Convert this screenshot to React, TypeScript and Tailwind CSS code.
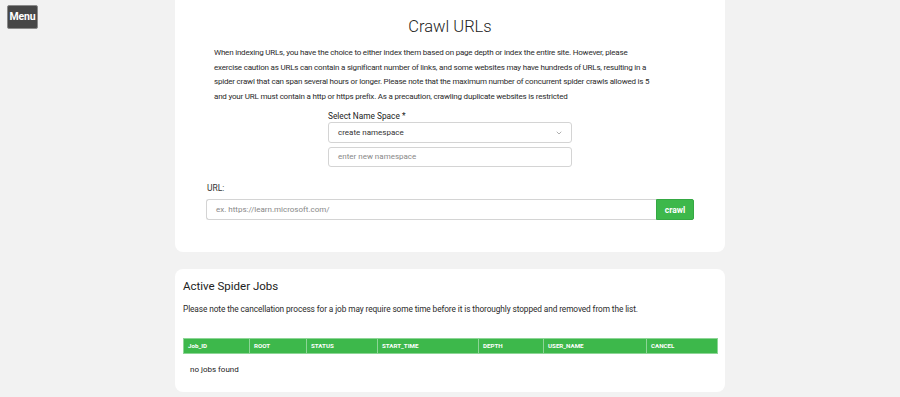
import { ChevronDown } from "lucide-react";

const COLUMNS = [
  { label: "Job_ID", width: "w-[65px]" },
  { label: "ROOT", width: "w-[57px]" },
  { label: "STATUS", width: "w-[71px]" },
  { label: "START_TIME", width: "w-[101px]" },
  { label: "DEPTH", width: "w-[65px]" },
  { label: "USER_NAME", width: "w-[103px]" },
  { label: "CANCEL", width: "flex-1" },
];

export default function App() {
  return (
    <div
      className="relative min-h-[397px] bg-[#f2f2f2] text-[#222]"
      style={{ fontFamily: "Roboto, 'Noto Sans', sans-serif" }}
    >
      <button className="absolute left-[7px] top-[5px] h-[24px] w-[31px] rounded-[2px] border border-[#8a8a8a] bg-[#474747] text-[10.5px] font-bold leading-none tracking-[-0.2px] text-white">
        Menu
      </button>

      <div className="mx-auto flex w-[550px] flex-col gap-[17px]">
        {/* crawl card */}
        <div className="rounded-b-[8px] bg-white px-[31px] pb-[32px] pt-[16px]">
          <h1 className="text-center text-[16.5px] font-light leading-[22px] text-[#222]">
            Crawl URLs
          </h1>
          <p className="ml-[8px] mt-[8px] max-w-[440px] text-[8px] leading-[14.6px] tracking-[-0.2px] text-[#2a2a2a]">
            When indexing URLs, you have the choice to either index them based on page depth or
            index the entire site. However, please exercise caution as URLs can contain a
            significant number of links, and some websites may have hundreds of URLs, resulting in
            a spider crawl that can span several hours or longer. Please note that the maximum
            number of concurrent spider crawls allowed is 5 and your URL must contain a http or
            https prefix. As a precaution, crawling duplicate websites is restricted
          </p>

          <div className="mx-auto mt-[6px] flex w-[244px] flex-col">
            <label className="text-[8.3px] leading-[12px] text-[#222]">Select Name Space *</label>
            <div className="flex h-[21px] items-center justify-between rounded-[3px] border border-[#d4d4d4] pl-[9px] pr-[8px]">
              <span className="text-[8px] text-[#333]">create namespace</span>
              <ChevronDown className="h-[8px] w-[8px] text-[#888]" strokeWidth={2} />
            </div>
            <div className="mt-[4px] flex h-[20px] items-center rounded-[3px] border border-[#d4d4d4] pl-[9px]">
              <span className="text-[8px] text-[#888]">enter new namespace</span>
            </div>
          </div>

          <div className="mt-[15px]">
            <label className="block pl-[1px] text-[8.5px] leading-[12px] text-[#333]">URL:</label>
            <div className="mt-[5px] flex h-[21px]">
              <div className="flex flex-1 items-center rounded-l-[3px] border border-r-0 border-[#d4d4d4] pl-[9px]">
                <span className="text-[8px] text-[#888]">ex. https://learn.microsoft.com/</span>
              </div>
              <button className="w-[38px] rounded-r-[2px] border border-[#35a843] bg-[#3db84b] text-[8.5px] font-bold text-white">
                crawl
              </button>
            </div>
          </div>
        </div>

        {/* jobs card */}
        <div className="rounded-[8px] bg-white pb-[17px] pl-[8px] pr-[7px] pt-[10px]">
          <h2 className="text-[11.5px] leading-[14px] text-[#222]">Active Spider Jobs</h2>
          <p className="mt-[11px] text-[8.3px] leading-[10px] tracking-[-0.1px] text-[#2a2a2a]">
            Please note the cancellation process for a job may require some time before it is
            thoroughly stopped and removed from the list.
          </p>
          <div className="mt-[24px] flex h-[16px] border border-[#8dd596] bg-[#3db84b]">
            {COLUMNS.map((c, i) => (
              <div
                key={c.label}
                className={`${c.width} flex items-center px-[4px] text-[6.2px] font-bold text-white ${
                  i > 0 ? "border-l border-[#8dd596]" : ""
                }`}
              >
                {c.label}
              </div>
            ))}
          </div>
          <div className="pl-[7px] pt-[11px] text-[8px] leading-[10px] text-[#222]">no jobs found</div>
        </div>
      </div>
    </div>
  );
}
